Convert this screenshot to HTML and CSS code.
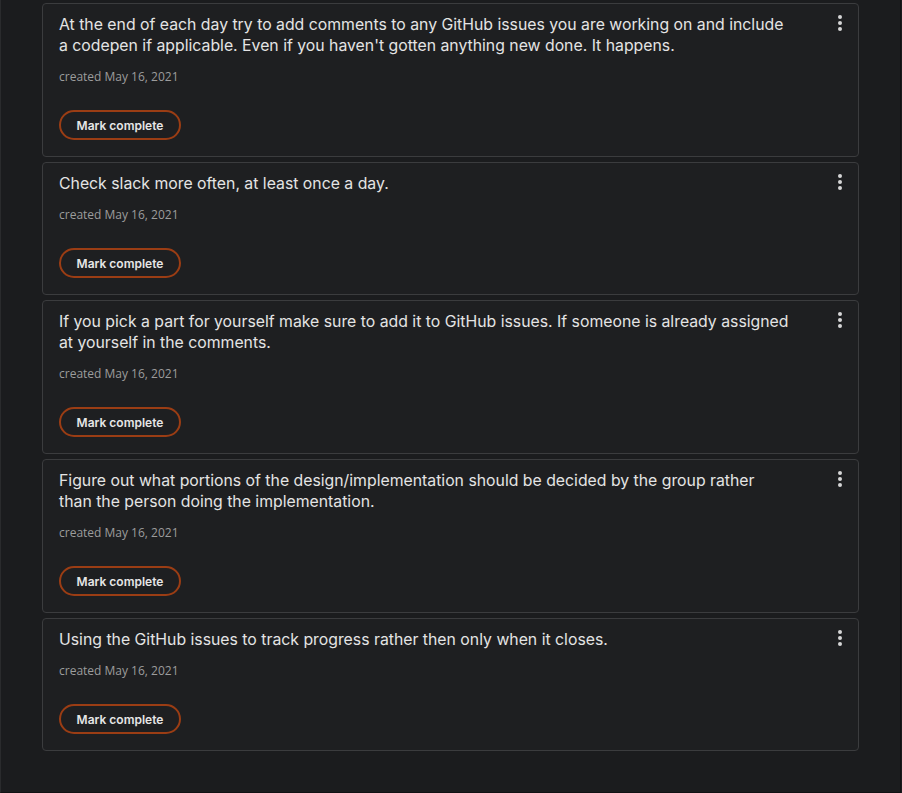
FILE: index.html
```html
<!DOCTYPE html>
<html lang="en">
<head>
<meta charset="utf-8">
<title>Tasks</title>
<link rel="stylesheet" href="styles.css">
</head>
<body>
<main class="page">
  <section class="list">
    <article class="card">
      <div class="card-head">
        <p class="title">At the end of each day try to add comments to any GitHub issues you are working on and include a codepen if applicable. Even if you haven't gotten anything new done. It happens.</p>
        <button class="kebab" aria-label="More"><span></span><span></span><span></span></button>
      </div>
      <p class="meta">created May 16, 2021</p>
      <button class="mark">Mark complete</button>
    </article>
    <article class="card">
      <div class="card-head">
        <p class="title">Check slack more often, at least once a day.</p>
        <button class="kebab" aria-label="More"><span></span><span></span><span></span></button>
      </div>
      <p class="meta">created May 16, 2021</p>
      <button class="mark">Mark complete</button>
    </article>
    <article class="card">
      <div class="card-head">
        <p class="title">If you pick a part for yourself make sure to add it to GitHub issues. If someone is already assigned at yourself in the comments.</p>
        <button class="kebab" aria-label="More"><span></span><span></span><span></span></button>
      </div>
      <p class="meta">created May 16, 2021</p>
      <button class="mark">Mark complete</button>
    </article>
    <article class="card">
      <div class="card-head">
        <p class="title">Figure out what portions of the design/implementation should be decided by the group rather than the person doing the implementation.</p>
        <button class="kebab" aria-label="More"><span></span><span></span><span></span></button>
      </div>
      <p class="meta">created May 16, 2021</p>
      <button class="mark">Mark complete</button>
    </article>
    <article class="card">
      <div class="card-head">
        <p class="title">Using the GitHub issues to track progress rather then only when it closes.</p>
        <button class="kebab" aria-label="More"><span></span><span></span><span></span></button>
      </div>
      <p class="meta">created May 16, 2021</p>
      <button class="mark">Mark complete</button>
    </article>
  </section>
</main>
</body>
</html>
```

FILE: styles.css
```css
html, body {
  margin: 0;
  padding: 0;
  background: #1b1c1e;
}
body {
  font-family: Inter, "Noto Sans", sans-serif;
  color: #e6e6e6;
}
.page {
  box-sizing: border-box;
  width: 901px;
  height: 793px;
  border-left: 1px solid #2a2b2d;
  border-bottom: 1px solid #111213;
  border-right: 1px solid #111213;
  padding: 3px 41px 0 41px;
  background: #1b1c1e;
}
.list {
  display: flex;
  flex-direction: column;
  gap: 5px;
}
.card {
  background: #1e1f21;
  border: 1px solid #3b3c3e;
  border-radius: 4px;
  padding: 10px 16px 16px 16px;
}
.card-head {
  display: flex;
  align-items: flex-start;
  justify-content: space-between;
}
.title {
  flex: 0 1 730px;
  margin: 0;
  font-size: 15.8px;
  line-height: 21px;
  color: #e4e4e4;
}
.kebab {
  display: flex;
  flex-direction: column;
  gap: 2px;
  background: none;
  border: 0;
  padding: 0;
  margin: 1px 0 0 0;
  cursor: pointer;
}
.kebab span {
  width: 4px;
  height: 4px;
  border-radius: 50%;
  background: #d6d6d6;
}
.meta {
  margin: 13px 0 0 0;
  font-family: "Open Sans", sans-serif;
  font-size: 12px;
  line-height: 16px;
  color: #9c9c9c;
}
.mark {
  display: block;
  margin-top: 25px;
  box-sizing: border-box;
  width: 122px;
  height: 30px;
  border: 2px solid #9b3d14;
  border-radius: 15px;
  background: transparent;
  color: #e6e6e6;
  font-family: Inter, sans-serif;
  font-size: 12px;
  font-weight: 600;
  padding: 0;
}
```
